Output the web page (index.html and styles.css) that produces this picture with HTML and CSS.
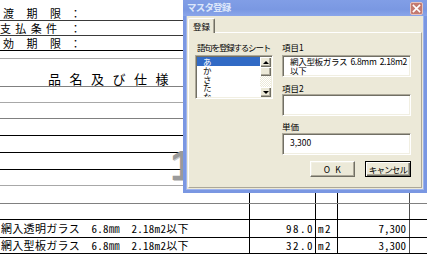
FILE: index.html
```html
<!DOCTYPE html>
<html lang="ja">
<head>
<meta charset="utf-8">
<title>マスタ登録</title>
<link rel="stylesheet" href="styles.css">
</head>
<body>
<div class="page">
  <div class="sheet">
    <div class="row r-a"><span class="lbl wide"><span>渡</span><span>期</span><span>限</span></span><span class="colon">：</span></div>
    <div class="row r-b"><span class="lbl pay"><span>支</span><span>払</span><span>条</span><span>件</span></span><span class="colon">：</span></div>
    <div class="row r-c"><span class="lbl wide"><span>効</span><span>期</span><span>限</span></span><span class="colon">：</span></div>
    <div class="row r-d"></div>
    <div class="row r-e"><span class="heading">品名及び仕様</span></div>
    <div class="row r-f"></div>
    <div class="row r-g"></div>
    <div class="row r-h"></div>
    <div class="row r-i"></div>
    <div class="row r-j"></div>
    <div class="row r-k"></div>
    <div class="row tbl r-l"><div class="c"></div><div class="c"></div><div class="c"></div><div class="c"></div><div class="c"></div></div>
    <div class="row tbl r-m"><div class="c"></div><div class="c"></div><div class="c"></div><div class="c"></div><div class="c"></div></div>
    <div class="row tbl r-n"><div class="c desc">網入透明ガラス　6.8㎜　2.18m2以下</div><div class="c qty">98.0</div><div class="c unit">m2</div><div class="c price">7,300</div><div class="c"></div></div>
    <div class="row tbl r-o"><div class="c desc">網入型板ガラス　6.8㎜　2.18m2以下</div><div class="c qty">32.0</div><div class="c unit">m2</div><div class="c price">3,300</div><div class="c"></div></div>
  </div>

  <div class="pagenum">1</div>

  <div class="dialog">
    <div class="titlebar">
      <span class="title-text">マスタ登録</span>
      <span class="close"><svg width="11" height="11" viewBox="0 0 11 11"><path d="M2.5 2.5 L8.5 8.5 M8.5 2.5 L2.5 8.5" stroke="#fff" stroke-width="1.7" stroke-linecap="square"/></svg></span>
    </div>
    <div class="frame">
      <div class="tabs"><span class="tab">登録</span></div>
      <div class="panel">
        <div class="col-left">
          <div class="label squeeze">語句を登録するシート</div>
          <div class="listbox">
            <ul class="items">
              <li class="sel">あ</li>
              <li>か</li>
              <li>さ</li>
              <li>た</li>
              <li>な</li>
            </ul>
            <div class="vscroll">
              <span class="sb-btn"><i class="tri up"></i></span>
              <span class="sb-thumb"></span>
              <span class="sb-track"></span>
              <span class="sb-btn"><i class="tri down"></i></span>
            </div>
          </div>
        </div>
        <div class="col-right">
          <div class="label">項目1</div>
          <div class="textbox multi">網入型板ガラス  6.8mm  2.18m2<br>以下</div>
          <div class="label gap6">項目2</div>
          <div class="textbox"></div>
          <div class="label gap5">単価</div>
          <div class="textbox single">3,300</div>
          <div class="buttons">
            <button class="btn ok">O&nbsp;&nbsp;K</button>
            <button class="btn default">キャンセル</button>
          </div>
        </div>
      </div>
    </div>
  </div>
</div>
</body>
</html>
```

FILE: styles.css
```css
* { box-sizing: border-box; }
html, body { margin: 0; padding: 0; }
body {
  width: 427px;
  height: 254px;
  overflow: hidden;
  background: #fff;
  font-family: "Noto Sans CJK JP", sans-serif;
}
.page {
  position: relative;
  width: 427px;
  height: 254px;
  overflow: hidden;
}

/* ---------- spreadsheet ---------- */
.sheet {
  font-family: "Noto Sans Mono CJK JP", "Noto Sans CJK JP", monospace;
  font-size: 11px;
  color: #000;
}
.row {
  display: flex;
  align-items: flex-end;
  border-bottom: 1px solid #000;
  line-height: 11px;
}
.r-a { height: 21px; border-color: #3a3a3a; padding-bottom: 1px; }
.r-b { height: 15px; border-color: #3a3a3a; padding-bottom: 1px; }
.r-c { height: 15px; border-color: #000; padding-bottom: 1px; }
.r-d { height: 8px; border-color: #a8a8a8; }
.r-e { height: 28px; border-color: #808080; padding-bottom: 1px; }
.r-f { height: 16px; border-color: #a8a8a8; }
.r-g { height: 16px; border-color: #808080; }
.r-h { height: 17px; }
.r-i { height: 17px; }
.r-j { height: 17px; }
.r-k { height: 16px; border-color: #a8a8a8; }
.r-l { height: 18px; border-color: #808080; }
.r-m { height: 16px; }
.r-n { height: 18px; }
.r-o { height: 16px; }

.lbl {
  display: flex;
  justify-content: space-between;
  white-space: nowrap;
}
.lbl.wide { margin-left: 3px; width: 58px; margin-right: 9px; }
.lbl.pay { margin-left: 0; width: 57px; margin-right: 13px; }
.colon { width: 11px; }

.heading {
  padding-left: 48px;
  font-size: 13px;
  line-height: 13px;
  letter-spacing: 8.5px;
  white-space: nowrap;
}

.tbl {
  display: grid;
  grid-template-columns: 249px 66px 22px 72px 18px;
  align-items: stretch;
}
.tbl .c {
  display: flex;
  align-items: center;
  white-space: nowrap;
  overflow: hidden;
}
.tbl .c + .c { border-left: 1px solid #000; }
.tbl .c:last-child { border-left-color: #505050; }
.desc { padding-left: 1px; letter-spacing: 0.3px; }
.qty { justify-content: flex-end; padding-right: 1px; letter-spacing: 1.5px; }
.unit { padding-left: 2px; letter-spacing: 1.5px; }
.price { justify-content: flex-end; padding-right: 3px; }

.pagenum {
  position: absolute;
  left: 170px;
  top: 144px;
  font-family: "Liberation Sans", sans-serif;
  font-weight: bold;
  font-size: 43px;
  line-height: 43px;
  color: #9a9a9a;
  text-shadow: 1px 1px 0 #c8c8c8;
}

/* ---------- dialog ---------- */
.dialog {
  position: absolute;
  left: 183px;
  top: 0;
  width: 244px;
  height: 193px;
  display: flex;
  flex-direction: column;
  z-index: 2;
  font-size: 8.5px;
  color: #000;
}
.titlebar {
  height: 16px;
  flex: none;
  display: flex;
  align-items: flex-start;
  padding-left: 4px;
  background: linear-gradient(#819EE6, #7A98E2 60%, #8AA6EA);
}
.title-text {
  margin-top: 2px;
  font-size: 9.5px;
  line-height: 11px;
  font-weight: bold;
  letter-spacing: -0.8px;
  color: #DCE6FA;
  white-space: nowrap;
}
.close {
  margin-left: auto;
  margin-right: 4px;
  margin-top: 2px;
  width: 13px;
  height: 13px;
  border-radius: 2px;
  border: 1px solid #E6C4C0;
  background: #C47A70;
  display: flex;
  align-items: center;
  justify-content: center;
}
.close svg { display: block; }

.frame {
  flex: 1;
  display: flex;
  flex-direction: column;
  background: #ECE9D8;
  border: 3px solid #7A97E2;
  border-top: 0;
  box-shadow: inset 1px 0 0 #9FB4EC, inset -1px 0 0 #9FB4EC, inset 0 -1px 0 #9FB4EC;
}
.tabs {
  display: flex;
  margin-top: 2px;
  padding-left: 2px;
}
.tab {
  position: relative;
  z-index: 1;
  width: 27px;
  height: 15px;
  margin-bottom: -1px;
  padding-left: 4px;
  padding-top: 2px;
  line-height: 11px;
  white-space: nowrap;
  background: #ECE9D8;
  border-top: 1px solid #fff;
  border-left: 1px solid #fff;
  border-right: 1px solid #716F64;
  border-radius: 2px 2px 0 0;
  box-shadow: inset -1px 0 0 #ACA899;
}
.panel {
  flex: 1;
  margin: 0 2px 2px;
  border-top: 1px solid #fff;
  border-left: 1px solid #fff;
  border-right: 1px solid #ACA899;
  border-bottom: 1px solid #ACA899;
  padding: 9px 10px 0 6px;
  display: grid;
  grid-template-columns: 78px 129px;
  column-gap: 9px;
  align-items: start;
}
.col-left, .col-right {
  display: flex;
  flex-direction: column;
}
.label {
  height: 11px;
  line-height: 11px;
  margin-bottom: 2px;
  white-space: nowrap;
}
.label.squeeze { letter-spacing: -1.2px; padding-left: 2px; }
.label.gap6 { margin-top: 6px; margin-bottom: 0; }
.label.gap5 { margin-top: 5px; margin-bottom: 1px; }

.listbox {
  height: 44px;
  display: flex;
  background: #fff;
  border: 1px solid;
  border-color: #ACA899 #fff #fff #ACA899;
  box-shadow: inset 1px 1px 0 #716F64, inset -1px -1px 0 #F1EFE2;
  padding: 1px;
  overflow: hidden;
}
.items {
  list-style: none;
  margin: 0;
  padding: 0;
  flex: 1;
  overflow: hidden;
}
.items li {
  height: 8.6px;
  line-height: 8.6px;
  font-size: 8.5px;
  padding-left: 6px;
  white-space: nowrap;
}
.items li.sel {
  background: #316AC5;
  color: #fff;
  height: 9px;
}
.vscroll {
  width: 11px;
  flex: none;
  display: flex;
  flex-direction: column;
}
.sb-btn {
  height: 10px;
  flex: none;
  background: #ECE9D8;
  box-shadow: inset 1px 1px 0 #fff, inset -1px -1px 0 #716F64, inset -2px -2px 0 #ACA899;
  display: flex;
  align-items: center;
  justify-content: center;
}
.sb-thumb {
  height: 9px;
  flex: none;
  background: #ECE9D8;
  box-shadow: inset 1px 1px 0 #fff, inset -1px -1px 0 #716F64, inset -2px -2px 0 #ACA899;
}
.sb-track {
  flex: 1;
  background-color: #fff;
  background-image: conic-gradient(#ECE9D8 25%, #fff 0 50%, #ECE9D8 0 75%, #fff 0);
  background-size: 2px 2px;
}
.tri {
  display: block;
  width: 0;
  height: 0;
  border-left: 3px solid transparent;
  border-right: 3px solid transparent;
}
.tri.up { border-bottom: 3px solid #000; }
.tri.down { border-top: 3px solid #000; }

.textbox {
  height: 22px;
  background: #fff;
  border: 1px solid;
  border-color: #ACA899 #fff #fff #ACA899;
  box-shadow: inset 1px 1px 0 #716F64, inset -1px -1px 0 #F1EFE2;
  padding: 2px 4px 0 7px;
  white-space: nowrap;
  overflow: hidden;
  line-height: 9px;
}
.textbox.multi { white-space: pre; padding-top: 1px; letter-spacing: -0.3px; }
.textbox.single { padding-top: 4px; }

.buttons {
  display: flex;
  justify-content: flex-end;
  gap: 10px;
  margin-top: 6px;
}
.btn {
  font-family: "Noto Sans CJK JP", sans-serif;
  font-size: 8.5px;
  line-height: 10px;
  height: 16px;
  width: 45px;
  padding: 0;
  margin: 0;
  color: #000;
  background: #ECE9D8;
  border: 1px solid;
  border-color: #fff #716F64 #716F64 #fff;
  box-shadow: inset -1px -1px 0 #ACA899, inset 1px 1px 0 #F1EFE2;
  white-space: nowrap;
}
.btn.ok { letter-spacing: 0.5px; }
.btn.default {
  width: 46px;
  border: 1px solid #000;
  box-shadow: inset 1px 1px 0 #fff, inset -1px -1px 0 #716F64, inset -2px -2px 0 #ACA899;
  letter-spacing: -0.8px;
}
```
